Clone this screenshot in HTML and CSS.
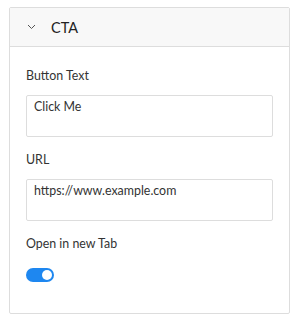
FILE: index.html
```html
<!DOCTYPE html>
<html lang="en">
<head>
    <meta charset="UTF-8">
    <meta name="viewport" content="width=device-width, initial-scale=1.0">
    <title>CTA</title>
    <link rel="stylesheet" href="styles.css">
</head>
<body>
    <div class="panel">
        <div class="panel-header">
            <svg class="chevron" width="9" height="6" viewBox="0 0 9 6">
                <polyline points="1,1 4.5,4.5 8,1" fill="none" stroke="#555" stroke-width="1"/>
            </svg>
            <span class="panel-title">CTA</span>
        </div>

        <div class="panel-body">
            <div class="form-group">
                <label for="btnText">Button Text</label>
                <textarea id="btnText" rows="2">Click Me</textarea>
            </div>

            <div class="form-group">
                <label for="url">URL</label>
                <textarea id="url" rows="2">https://www.example.com</textarea>
            </div>

            <div class="form-group">
                <label>Open in new Tab</label>
                <span class="toggle"><span class="knob"></span></span>
            </div>
        </div>
    </div>
</body>
</html>
```

FILE: styles.css
```css
* {
    margin: 0;
    padding: 0;
    box-sizing: border-box;
}

body {
    font-family: 'Lato', 'Open Sans', sans-serif;
    color: #333;
    background: white;
    padding: 7px 11px 0 9px;
}

.panel {
    border: 1px solid #ddd;
    border-radius: 2px;
    height: 307px;
}

.panel-header {
    display: flex;
    align-items: center;
    height: 39px;
    padding-left: 17px;
    background-color: #f8f8f8;
    border-bottom: 1px solid #ddd;
}

.chevron {
    margin-right: 15px;
}

.panel-title {
    font-size: 14.5px;
    color: #222;
}

.panel-body {
    padding: 20px 16px 0 16px;
}

.form-group {
    margin-bottom: 14px;
}

label {
    display: block;
    font-size: 12.4px;
    line-height: 17px;
    margin-bottom: 11px;
}

textarea {
    display: block;
    width: 100%;
    height: 42px;
    border: 1px solid #ddd;
    border-radius: 2px;
    padding: 2px 7px;
    font-family: inherit;
    font-size: 12.4px;
    line-height: 17px;
    color: #333;
    resize: none;
    background: white;
}

.toggle {
    display: block;
    position: relative;
    width: 28px;
    height: 14px;
    margin-top: 16px;
    border-radius: 7px;
    background-color: #1e87f0;
}

.knob {
    position: absolute;
    right: 2px;
    top: 2px;
    width: 10px;
    height: 10px;
    border-radius: 50%;
    background: white;
}
```
